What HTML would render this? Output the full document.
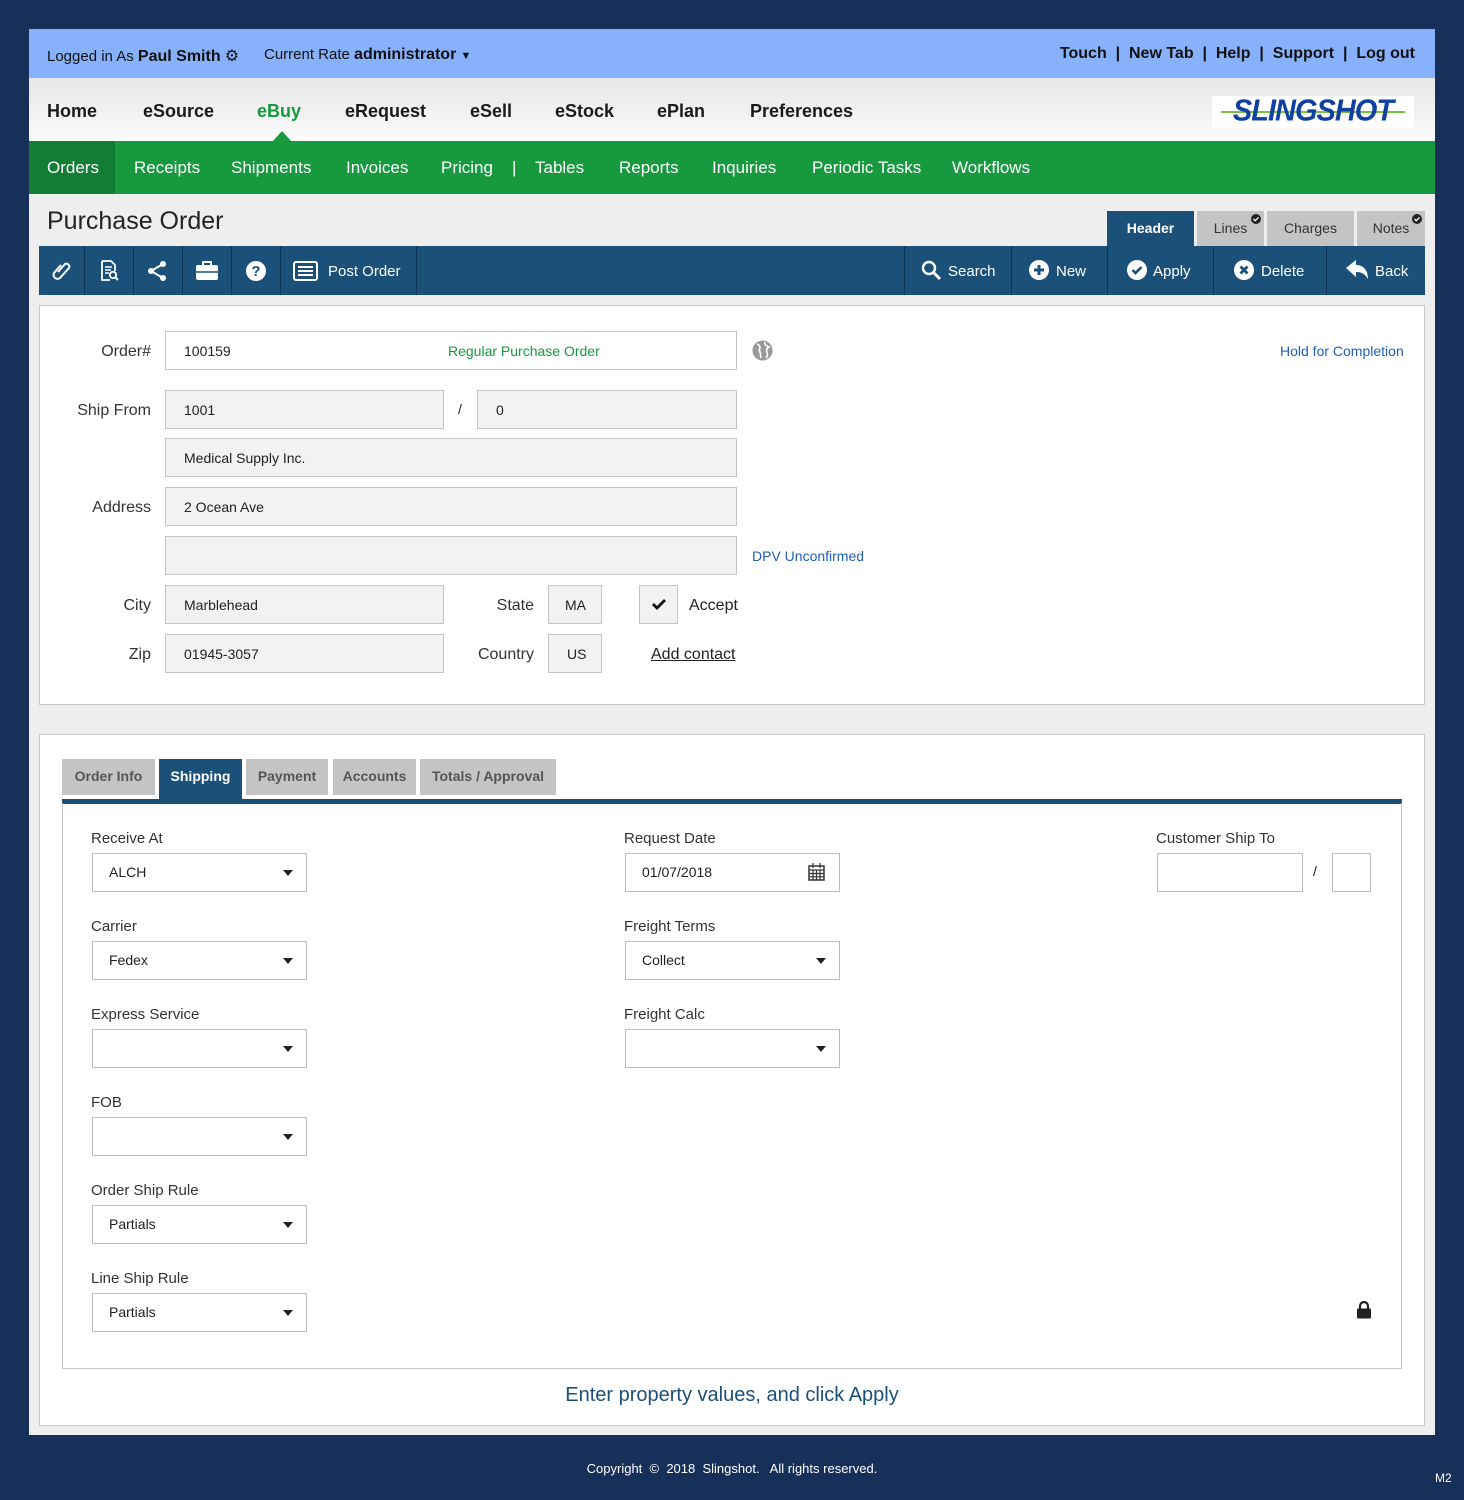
<!DOCTYPE html>
<html><head><meta charset="utf-8"><style>
*{box-sizing:border-box;margin:0;padding:0}
body{width:1464px;height:1500px;background:#16305a;font-family:"Liberation Sans",sans-serif;color:#222;position:relative;overflow:hidden}
.a{position:absolute}
.frame{left:29px;top:29px;width:1406px;height:1406px;background:#eeeeee}
.top{left:29px;top:29px;width:1406px;height:49px;background:#87b1fb;font-size:15px;color:#111}
.nav{left:29px;top:78px;width:1406px;height:63px;background:linear-gradient(#e6e6e6,#fbfbfb)}
.nav span{position:absolute;top:23px;font-size:18px;font-weight:bold;color:#1a1a1a}
.green{left:29px;top:141px;width:1406px;height:53px;background:#17993f}
.green span{position:absolute;top:17px;font-size:17px;color:#fff}
.tb{left:39px;top:246px;width:1386px;height:49px;background:#1b5079;color:#fff;font-size:15px}
.sep{position:absolute;top:0;width:1px;height:49px;background:#0d3456}
.tb .t{position:absolute;top:17px}
.ico{position:absolute;top:14px}
.panel{background:#fff;border:1px solid #c8c8c8}
.lbl{position:absolute;font-size:16px;color:#333;text-align:right}
.in{position:absolute;height:39px;border:1px solid #c4c4c4;background:#f2f2f2;font-size:14px;padding:11px 0 0 18px;color:#222}
.w{background:#fff}
.sl{position:absolute;height:39px;width:215px;border:1px solid #bdbdbd;background:#fff;font-size:14px;padding:10px 0 0 16px}
.sl:after{content:"";position:absolute;right:13px;top:16px;border:5px solid transparent;border-top:6px solid #222}
.fl{position:absolute;font-size:15px;color:#333}
.tab{position:absolute;top:759px;height:36px;background:#c4c4c4;color:#555;font-size:14px;font-weight:bold;padding-top:9px;text-align:center}
.rt{position:absolute;top:211px;height:35px;background:#c4c4c4;color:#333;font-size:14px;text-align:center;padding-top:9px}
.dot{position:absolute;top:3px}
</style></head><body>
<div class="a frame"></div>
<div class="a top">
 <div class="a" style="left:18px;top:17px">Logged in As <b style="font-size:16px">Paul Smith</b> <span style="font-size:16px">&#9881;</span></div>
 <div class="a" style="left:235px;top:17px">Current Rate <b style="font-size:16px">administrator</b> <span style="font-size:11px">&#9660;</span></div>
 <div class="a" style="right:20px;top:16px;font-size:16px;font-weight:bold;color:#111">Touch &nbsp;| &nbsp;New Tab &nbsp;| &nbsp;Help &nbsp;| &nbsp;Support &nbsp;| &nbsp;Log out</div>
</div>
<div class="a nav">
 <span style="left:18px">Home</span><span style="left:114px">eSource</span><span style="left:228px;color:#17993f">eBuy</span><span style="left:316px">eRequest</span><span style="left:441px">eSell</span><span style="left:526px">eStock</span><span style="left:628px">ePlan</span><span style="left:721px">Preferences</span>
 <div class="a" style="left:1183px;top:18px;width:202px;height:32px;background:#fff;overflow:hidden">
  <div class="a" style="left:9px;top:15px;width:184px;height:2px;background:#7dc142"></div>
  <div class="a" style="left:4px;top:-1px;width:194px;text-align:center;font-size:29px;font-weight:900;font-style:italic;color:#1040a0;letter-spacing:-1px;transform:scaleY(1.05)">SLINGSHOT</div>
 </div>
 <div class="a" style="left:244px;top:53px;border:9px solid transparent;border-bottom:10px solid #17993f;border-top:0"></div>
</div>
<div class="a green">
 <div class="a" style="left:0;top:0;width:86px;height:53px;background:#127d34"></div>
 <span style="left:18px">Orders</span><span style="left:105px">Receipts</span><span style="left:202px">Shipments</span><span style="left:317px">Invoices</span><span style="left:412px">Pricing</span><span style="left:483px">|</span><span style="left:506px">Tables</span><span style="left:590px">Reports</span><span style="left:683px">Inquiries</span><span style="left:783px">Periodic Tasks</span><span style="left:923px">Workflows</span>
</div>
<div class="a" style="left:47px;top:207px;font-size:25px;color:#222">Purchase Order</div>
<div class="rt" style="left:1107px;width:87px;background:#1b5079;color:#fff;font-weight:bold">Header</div>
<div class="rt" style="left:1197px;width:67px">Lines<svg class="dot" style="left:54px" width="10" height="10" viewBox="0 0 10 10"><circle cx="5" cy="5" r="5" fill="#222"/><path d="M2.5 5l1.7 1.7 3.3-3.3" stroke="#fff" stroke-width="1.3" fill="none"/></svg></div>
<div class="rt" style="left:1267px;width:87px">Charges</div>
<div class="rt" style="left:1357px;width:68px">Notes<svg class="dot" style="left:55px" width="10" height="10" viewBox="0 0 10 10"><circle cx="5" cy="5" r="5" fill="#222"/><path d="M2.5 5l1.7 1.7 3.3-3.3" stroke="#fff" stroke-width="1.3" fill="none"/></svg></div>
<div class="a tb">
 <div class="sep" style="left:45px"></div><div class="sep" style="left:94px"></div><div class="sep" style="left:143px"></div><div class="sep" style="left:192px"></div><div class="sep" style="left:241px"></div><div class="sep" style="left:377px"></div>
 <svg class="ico" style="left:13px" width="20" height="22" viewBox="0 0 20 22"><path d="M6 12 L13 4 a3 3 0 0 1 4 4 L8 18 a4 4 0 0 1-6-5 L9 5" fill="none" stroke="#fff" stroke-width="2"/></svg>
 <svg class="ico" style="left:61px" width="20" height="22" viewBox="0 0 20 22"><path d="M2 1h9l4 4v6M2 1v19h8" fill="none" stroke="#fff" stroke-width="1.8"/><path d="M5 7h7M5 10h6M5 13h4" stroke="#fff" stroke-width="1.5"/><circle cx="13" cy="15" r="3.2" fill="none" stroke="#fff" stroke-width="1.8"/><path d="M15 17l3 3" stroke="#fff" stroke-width="2"/></svg>
 <svg class="ico" style="left:107px" width="22" height="22" viewBox="0 0 22 22"><circle cx="17" cy="4" r="3" fill="#fff"/><circle cx="5" cy="11" r="3" fill="#fff"/><circle cx="17" cy="18" r="3" fill="#fff"/><path d="M17 4L5 11L17 18" stroke="#fff" stroke-width="2" fill="none"/></svg>
 <svg class="ico" style="left:156px;top:15px" width="24" height="20" viewBox="0 0 24 20"><rect x="1" y="4" width="22" height="15" rx="2" fill="#fff"/><rect x="8" y="1" width="8" height="4" fill="none" stroke="#fff" stroke-width="2"/><path d="M1 11h22" stroke="#1b5079" stroke-width="1.5"/></svg>
 <svg class="ico" style="left:206px" width="22" height="22" viewBox="0 0 22 22"><circle cx="11" cy="11" r="10" fill="#fff"/><text x="11" y="16" text-anchor="middle" font-size="15" font-weight="bold" fill="#1b5079" font-family="Liberation Sans">?</text></svg>
 <svg class="ico" style="left:254px;top:15px" width="25" height="20" viewBox="0 0 25 20"><rect x="1" y="1" width="23" height="18" rx="2" fill="none" stroke="#fff" stroke-width="2"/><path d="M5 6h15M5 10h15M5 14h15" stroke="#fff" stroke-width="2"/></svg>
 <span class="t" style="left:289px">Post Order</span>
 <div class="sep" style="left:865px"></div><div class="sep" style="left:972px"></div><div class="sep" style="left:1068px"></div><div class="sep" style="left:1174px"></div><div class="sep" style="left:1287px"></div>
 <svg class="ico" style="left:882px" width="21" height="21" viewBox="0 0 21 21"><circle cx="8" cy="8" r="6" fill="none" stroke="#fff" stroke-width="2.4"/><path d="M12 12l7 7" stroke="#fff" stroke-width="3"/></svg><span class="t" style="left:909px">Search</span>
 <svg class="ico" style="left:990px" width="20" height="20" viewBox="0 0 20 20"><circle cx="10" cy="10" r="10" fill="#fff"/><path d="M10 5v10M5 10h10" stroke="#1b5079" stroke-width="3"/></svg><span class="t" style="left:1017px">New</span>
 <svg class="ico" style="left:1088px" width="20" height="20" viewBox="0 0 20 20"><circle cx="10" cy="10" r="10" fill="#fff"/><path d="M5.5 10l3 3 6-6" stroke="#1b5079" stroke-width="2.6" fill="none"/></svg><span class="t" style="left:1114px">Apply</span>
 <svg class="ico" style="left:1195px" width="20" height="20" viewBox="0 0 20 20"><circle cx="10" cy="10" r="10" fill="#fff"/><path d="M6.5 6.5l7 7M13.5 6.5l-7 7" stroke="#1b5079" stroke-width="2.8"/></svg><span class="t" style="left:1222px">Delete</span>
 <svg class="ico" style="left:1307px" width="23" height="20" viewBox="0 0 23 20"><path d="M0 8L10 0v5c7 0 12 5 12 14c-3-5-6-7-12-7v5z" fill="#fff"/></svg><span class="t" style="left:1336px">Back</span>
</div>

<div class="a panel" style="left:39px;top:305px;width:1386px;height:400px"></div>
<div class="lbl" style="left:60px;top:343px;width:91px">Order#</div>
<div class="in w" style="left:165px;top:331px;width:572px">100159<span class="a" style="left:282px;top:11px;color:#17993f">Regular Purchase Order</span></div>
<svg class="a" style="left:752px;top:340px" width="21" height="21" viewBox="0 0 21 21"><circle cx="10.5" cy="10.5" r="10" fill="#999"/><path d="M5 4c3 1 4 4 2 6 2 2 1 5 2 8M13 2c-1 3 2 4 4 5-2 1-3 3-2 6 1 2 0 4-1 5" stroke="#fff" stroke-width="1.6" fill="none"/></svg>
<div class="a" style="left:1280px;top:343px;font-size:14px;color:#1f5fb8">Hold for Completion</div>
<div class="lbl" style="left:60px;top:402px;width:91px">Ship From</div>
<div class="in" style="left:165px;top:390px;width:279px">1001</div>
<div class="a" style="left:458px;top:401px;font-size:14px">/</div>
<div class="in" style="left:477px;top:390px;width:260px">0</div>
<div class="in" style="left:165px;top:438px;width:572px">Medical Supply Inc.</div>
<div class="lbl" style="left:60px;top:499px;width:91px">Address</div>
<div class="in" style="left:165px;top:487px;width:572px">2 Ocean Ave</div>
<div class="in" style="left:165px;top:536px;width:572px"></div>
<div class="a" style="left:752px;top:548px;font-size:14px;color:#1f5fb8">DPV Unconfirmed</div>
<div class="lbl" style="left:60px;top:597px;width:91px">City</div>
<div class="in" style="left:165px;top:585px;width:279px">Marblehead</div>
<div class="lbl" style="left:460px;top:597px;width:74px">State</div>
<div class="in" style="left:548px;top:585px;width:54px;padding-left:16px">MA</div>
<div class="in" style="left:639px;top:585px;width:39px;padding:0"><svg class="a" style="left:12px;top:13px" width="14" height="11" viewBox="0 0 14 11"><path d="M1 5l4 4 8-8" stroke="#111" stroke-width="2.8" fill="none"/></svg></div>
<div class="a" style="left:689px;top:597px;font-size:16px">Accept</div>
<div class="lbl" style="left:60px;top:646px;width:91px">Zip</div>
<div class="in" style="left:165px;top:634px;width:279px">01945-3057</div>
<div class="lbl" style="left:460px;top:646px;width:74px">Country</div>
<div class="in" style="left:548px;top:634px;width:54px;padding-left:18px">US</div>
<div class="a" style="left:651px;top:646px;font-size:16px;text-decoration:underline">Add contact</div>

<div class="a panel" style="left:39px;top:734px;width:1386px;height:692px"></div>
<div class="tab" style="left:62px;width:93px">Order Info</div>
<div class="tab" style="left:159px;width:83px;background:#1b5079;color:#fff;height:40px">Shipping</div>
<div class="tab" style="left:246px;width:82px">Payment</div>
<div class="tab" style="left:333px;width:83px">Accounts</div>
<div class="tab" style="left:420px;width:136px">Totals / Approval</div>
<div class="a" style="left:62px;top:799px;width:1340px;height:5px;background:#1b5079"></div>
<div class="a" style="left:62px;top:803px;width:1340px;height:566px;border:1px solid #c8c8c8;border-top:0"></div>

<div class="fl" style="left:91px;top:830px">Receive At</div><div class="sl" style="left:92px;top:853px">ALCH</div>
<div class="fl" style="left:91px;top:918px">Carrier</div><div class="sl" style="left:92px;top:941px">Fedex</div>
<div class="fl" style="left:91px;top:1006px">Express Service</div><div class="sl" style="left:92px;top:1029px"></div>
<div class="fl" style="left:91px;top:1094px">FOB</div><div class="sl" style="left:92px;top:1117px"></div>
<div class="fl" style="left:91px;top:1182px">Order Ship Rule</div><div class="sl" style="left:92px;top:1205px">Partials</div>
<div class="fl" style="left:91px;top:1270px">Line Ship Rule</div><div class="sl" style="left:92px;top:1293px">Partials</div>

<div class="fl" style="left:624px;top:830px">Request Date</div>
<div class="sl" style="left:625px;top:853px">01/07/2018<svg class="a" style="left:182px;top:9px" width="17" height="18" viewBox="0 0 17 18"><rect x="1" y="3" width="15" height="14" fill="none" stroke="#333" stroke-width="1.5"/><path d="M1 7h15M5 0v5M12 0v5M1 10.5h15M1 13.8h15M5 7v10M8.5 7v10M12 7v10" stroke="#333" stroke-width="1.2"/></svg></div>
<style>.sl:has(svg):after{display:none}</style>
<div class="fl" style="left:624px;top:918px">Freight Terms</div><div class="sl" style="left:625px;top:941px">Collect</div>
<div class="fl" style="left:624px;top:1006px">Freight Calc</div><div class="sl" style="left:625px;top:1029px"></div>

<div class="fl" style="left:1156px;top:830px">Customer Ship To</div>
<div class="a" style="left:1157px;top:853px;width:146px;height:39px;border:1px solid #bdbdbd"></div>
<div class="a" style="left:1313px;top:863px;font-size:14px">/</div>
<div class="a" style="left:1332px;top:853px;width:39px;height:39px;border:1px solid #bdbdbd"></div>
<svg class="a" style="left:1356px;top:1300px" width="16" height="19" viewBox="0 0 16 19"><path d="M4 9V6a4 4 0 0 1 8 0v3" fill="none" stroke="#222" stroke-width="2.2"/><rect x="1" y="8.5" width="14" height="10" rx="1" fill="#222"/></svg>

<div class="a" style="left:0;width:1464px;top:1384px;text-align:center;font-size:20px;color:#1b5079">Enter property values, and click Apply</div>
<div class="a" style="left:0;width:1464px;top:1461px;text-align:center;font-size:13px;color:#fff">Copyright &nbsp;©&nbsp; 2018 &nbsp;Slingshot. &nbsp; All rights reserved.</div>
<div class="a" style="left:1435px;top:1471px;font-size:12px;color:#fff">M2</div>
</body></html>
